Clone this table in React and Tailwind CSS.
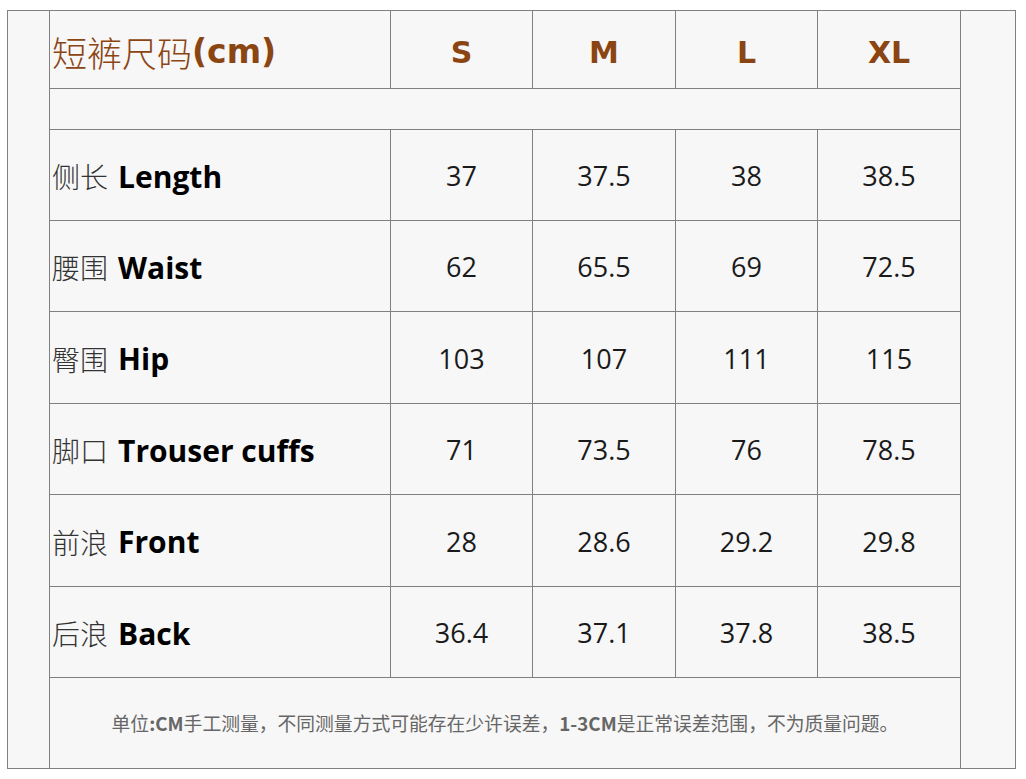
const sizes = ['S', 'M', 'L', 'XL']

const rows = [
    { zh: '侧长', en: 'Length', values: ['37', '37.5', '38', '38.5'], h: 'h-[91px]' },
    { zh: '腰围', en: 'Waist', values: ['62', '65.5', '69', '72.5'], h: 'h-[91px]' },
    { zh: '臀围', en: 'Hip', values: ['103', '107', '111', '115'], h: 'h-[92px]' },
    { zh: '脚口', en: 'Trouser cuffs', values: ['71', '73.5', '76', '78.5'], h: 'h-[91px]' },
    { zh: '前浪', en: 'Front', values: ['28', '28.6', '29.2', '29.8'], h: 'h-[92px]' },
    { zh: '后浪', en: 'Back', values: ['36.4', '37.1', '37.8', '38.5'], h: 'h-[91px]' },
]

const colWidths = ['w-[142px]', 'w-[143px]', 'w-[142px]', 'w-[142px]']

const cjk = { fontFamily: '"Noto Sans CJK SC", sans-serif' }
const sans = { fontFamily: '"Open Sans", "Noto Sans CJK SC", sans-serif' }
const heading = { fontFamily: '"DejaVu Sans", "Noto Sans CJK SC", sans-serif' }

export default function App() {
    return (
        <div className="min-h-screen bg-white pt-[10px] pl-[7px]">
            <div className="w-[1009px] h-[759px] border border-[#808080] bg-[#f7f7f7] flex">
                <div className="ml-[41px] w-[912px] border-x border-[#808080] flex flex-col">
                    {/* header */}
                    <div className="flex h-[78px] border-b border-[#808080] text-[#8b4513]">
                        <div className="w-[341px] border-r border-[#808080] flex items-center pl-[2px] pt-[5px]">
                            <span className="text-[35px] font-light" style={{ fontFamily: '"Noto Sans CJK SC", serif' }}>短裤尺码</span>
                            <span className="text-[33px] font-bold" style={heading}>(cm)</span>
                        </div>
                        {sizes.map((s, i) => (
                            <div
                                key={s}
                                className={`${colWidths[i]} ${i < 3 ? 'border-r border-[#808080]' : ''} flex items-center justify-center pt-[5px] text-[30px] font-bold`}
                                style={heading}
                            >
                                {s}
                            </div>
                        ))}
                    </div>

                    {/* spacer row */}
                    <div className="h-[41px] border-b border-[#808080]"></div>

                    {rows.map(r => (
                        <div key={r.en} className={`flex ${r.h} border-b border-[#808080]`}>
                            <div className="w-[341px] border-r border-[#808080] flex items-center pl-[2px] pt-[2px]">
                                <span className="text-[28px] text-[#333] font-light" style={cjk}>{r.zh}</span>
                                <span className="ml-[10px] text-[30px] font-bold text-black" style={sans}>{r.en}</span>
                            </div>
                            {r.values.map((v, i) => (
                                <div
                                    key={i}
                                    className={`${colWidths[i]} ${i < 3 ? 'border-r border-[#808080]' : ''} flex items-center justify-center pt-[3px] text-[27px] text-[#1a1a1a]`}
                                    style={sans}
                                >
                                    {v}
                                </div>
                            ))}
                        </div>
                    ))}

                    {/* footer note */}
                    <div className="flex-1 flex items-center justify-center">
                        <p className="text-[18.8px] text-[#666]" style={cjk}>
                            单位<b className="font-bold">:CM</b>手工测量，不同测量方式可能存在少许误差，<b className="font-bold">1-3CM</b>是正常误差范围，不为质量问题。
                        </p>
                    </div>
                </div>
            </div>
        </div>
    )
}
